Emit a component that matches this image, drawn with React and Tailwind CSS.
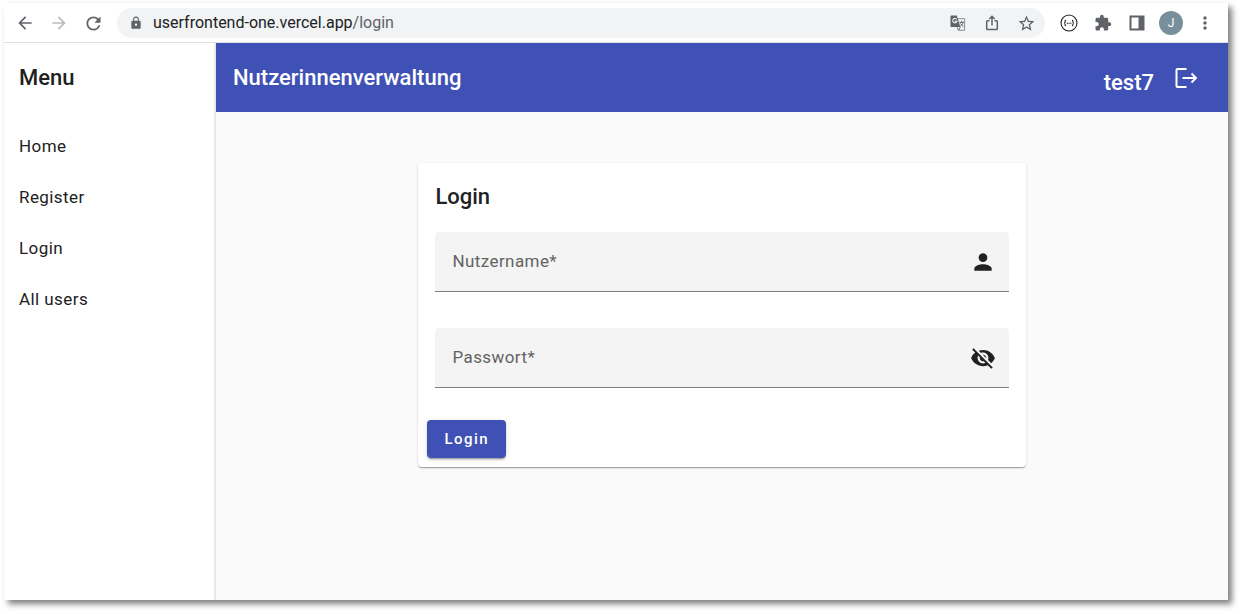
import {
  MdArrowBack,
  MdArrowForward,
  MdRefresh,
  MdLock,
  MdStarBorder,
  MdExtension,
  MdMoreVert,
  MdPerson,
  MdVisibilityOff,
} from "react-icons/md";

function ToolButton({ label, children }) {
  return (
    <button type="button" aria-label={label} className="flex h-8 w-[34px] shrink-0 items-center justify-center text-[#5f6368]">
      {children}
    </button>
  );
}

function TranslateIcon() {
  return (
    <svg width="16" height="16" viewBox="0 0 16 16" fill="none">
      <path d="M7 3.7h7.6v11.6H8.2L7 12" stroke="#8b8e92" />
      <path d="M1.2.5h5.6l3.6 11.6H1.2Q.5 12.1.5 11.4V1.2Q.5.5 1.2.5z" fill="#5f6368" />
      <path d="M6.7 4.3A2.2 2.2 0 1 0 7 6.4H4.9" stroke="#f1f3f4" strokeWidth="1.1" />
      <path d="M9.5 7.3h4.5M11.6 6.2v1.1M13 7.4c-.3 1.5-1.3 2.8-2.7 3.800M10.5 8.500l2.800 3.100M8.500 15l1.900-2.900" stroke="#5f6368" strokeWidth="1" />
    </svg>
  );
}

function ShareIcon() {
  return (
    <svg width="18" height="18" viewBox="0 0 18 18" fill="none" stroke="currentColor" strokeWidth="1.5">
      <path d="M6.5 6.7H4.5Q3.7 6.7 3.7 7.5v7.2q0 .8.8.8h9q.8 0 .8-.8V7.5q0-.8-.8-.8h-2M9 11.5V2.6M6.3 5 9 2.3 11.7 5" />
    </svg>
  );
}

function JsonIcon() {
  return (
    <svg width="18" height="18" viewBox="0 0 18 18" fill="none" stroke="#202124" strokeWidth="1.1">
      <circle cx="9" cy="9" r="8" />
      <path d="M6 6.4c-1.2 0-.9.7-.9 1.4 0 .8-.3 1.2-1 1.2.7 0 1 .4 1 1.2 0 .7-.3 1.4.9 1.4M12 6.4c1.2 0 .9.7.9 1.4 0 .8.3 1.2 1 1.2-.7 0-1 .4-1 1.2 0 .7.3 1.4-.9 1.4" />
      <path d="M6.8 9.3h1.2M8.5 9.3h1.2M10.2 9.3h1.2" />
    </svg>
  );
}

function PanelIcon() {
  return (
    <svg width="16" height="16" viewBox="0 0 16 16" fill="currentColor">
      <path fillRule="evenodd" d="M.5.5h15v15H.5zM2.5 2.5v11h7v-11z" />
    </svg>
  );
}

function LogoutIcon() {
  return (
    <svg width="24" height="24" viewBox="0 0 24 24" fill="none" stroke="currentColor" strokeWidth="2">
      <path d="M12.5 3H3.5Q2.5 3 2.5 4v16q0 1 1 1h9M8.5 12H22M17.5 7.5 22 12l-4.5 4.5" />
    </svg>
  );
}

function BrowserBar() {
  return (
    <div className="flex h-10 items-center gap-[7px] border-b border-[#dfe0e3] bg-white pt-px pr-1.5 pl-1">
      <div className="flex">
        <ToolButton label="Back"><MdArrowBack size={20} /></ToolButton>
        <ToolButton label="Forward"><MdArrowForward size={20} className="text-[#babcbe]" /></ToolButton>
        <ToolButton label="Reload"><MdRefresh size={21} /></ToolButton>
      </div>
      <div className="flex h-[30px] min-w-0 flex-1 items-center rounded-full bg-[#f1f3f4] pr-0.5 pl-3">
        <MdLock size={14} className="shrink-0 text-[#5f6368]" />
        <div className="min-w-0 flex-1 truncate pl-2.5 text-base leading-6 text-[#202124]">
          userfrontend-one.vercel.app<span className="text-[#5f6368]">/login</span>
        </div>
        <ToolButton label="Translate"><TranslateIcon /></ToolButton>
        <ToolButton label="Share"><ShareIcon /></ToolButton>
        <ToolButton label="Bookmark"><MdStarBorder size={19} /></ToolButton>
      </div>
      <div className="flex">
        <ToolButton label="JSON viewer"><JsonIcon /></ToolButton>
        <ToolButton label="Extensions"><MdExtension size={18} /></ToolButton>
        <ToolButton label="Side panel"><PanelIcon /></ToolButton>
        <ToolButton label="Profile">
          <span className="flex size-6 items-center justify-center rounded-full bg-[#78909c] text-xs text-white">J</span>
        </ToolButton>
        <ToolButton label="More"><MdMoreVert size={20} /></ToolButton>
      </div>
    </div>
  );
}

function Sidebar() {
  const items = ["Home", "Register", "Login", "All users"];
  return (
    <aside className="w-[212px] shrink-0 border-r-2 border-[#e8e8e8] bg-white">
      <h2 className="flex h-[68px] items-center px-[15px] text-[22px] font-medium">Menu</h2>
      <nav className="flex flex-col pt-2.5">
        {items.map((item) => (
          <a key={item} href="#" className="flex h-[51px] items-center px-[15px] text-[17px] tracking-wide">
            {item}
          </a>
        ))}
      </nav>
    </aside>
  );
}

function Field({ id, label, type, children }) {
  return (
    <div className="relative flex h-[60px] items-center rounded-t border-b border-[#7f7f7f] bg-[#f4f4f4]">
      <input
        id={id}
        type={type}
        required
        placeholder=" "
        className="peer h-full min-w-0 flex-1 bg-transparent px-[17px] text-[17px] outline-none"
      />
      <label
        htmlFor={id}
        className="pointer-events-none absolute inset-y-0 left-[17px] hidden items-center text-[17px] tracking-wide text-[#636363] peer-placeholder-shown:flex"
      >
        {label}*
      </label>
      <span className="flex w-[51px] shrink-0 justify-center">{children}</span>
    </div>
  );
}

export default function App() {
  return (
    <div className="flex min-h-screen flex-col bg-white pt-[3px] pr-3.5 pb-3.5 pl-1 font-['Roboto',sans-serif] text-[#212121]">
      <div className="flex flex-1 flex-col shadow-[4px_4px_6px_0_rgba(0,0,0,0.5)]">
        <BrowserBar />
        <div className="flex flex-1">
          <Sidebar />
          <div className="flex min-w-0 flex-1 flex-col bg-[#fafafa]">
            <header className="flex h-[69px] items-center justify-between bg-[#3f51b5] pr-[30px] pl-[17px] text-white">
              <h1 className="text-[22px] font-medium">Nutzerinnenverwaltung</h1>
              <div className="flex items-center gap-5">
                <span className="pt-2.5 text-[22px] font-medium">test7</span>
                <button type="button" aria-label="Logout"><LogoutIcon /></button>
              </div>
            </header>
            <main className="pt-[51px]">
              <form className="mx-auto w-3/5 rounded bg-white px-[17px] pt-[17px] pb-[9px] shadow-[0_2px_1px_-1px_rgba(0,0,0,0.2),0_1px_1px_0_rgba(0,0,0,0.14),0_1px_3px_0_rgba(0,0,0,0.12)]">
                <h2 className="mb-[18px] text-[22px] leading-[34px] font-medium">Login</h2>
                <div className="flex flex-col gap-9">
                  <Field id="username" label="Nutzername" type="text">
                    <MdPerson size={26} />
                  </Field>
                  <Field id="password" label="Passwort" type="password">
                    <button type="button" aria-label="Passwort anzeigen"><MdVisibilityOff size={26} /></button>
                  </Field>
                </div>
                <button
                  type="button"
                  className="mt-8 -ml-2 flex h-[38px] items-center rounded bg-[#3f51b5] px-[17px] text-[15px] font-medium tracking-widest text-white shadow-[0_3px_1px_-2px_rgba(0,0,0,0.2),0_2px_2px_0_rgba(0,0,0,0.14),0_1px_5px_0_rgba(0,0,0,0.12)]"
                >
                  Login
                </button>
              </form>
            </main>
          </div>
        </div>
      </div>
    </div>
  );
}
